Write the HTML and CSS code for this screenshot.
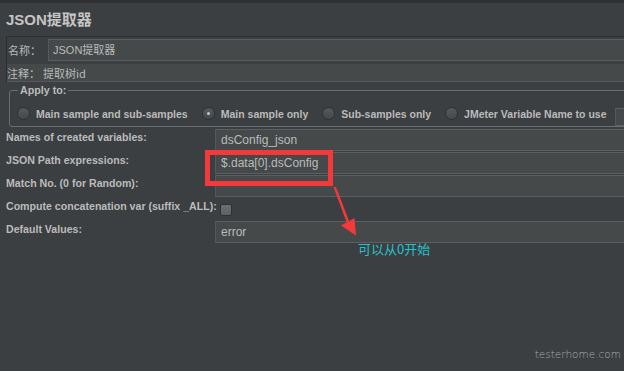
FILE: index.html
```html
<!DOCTYPE html>
<html>
	<head>
		<meta charset="utf-8">
		<title>JSON提取器</title>
		<link rel="stylesheet" href="styles.css">
	</head>
	<body>
		<div class="page">
			<h1 class="title">JSON提取器</h1>

			<!-- 名称 / 注释 -->
			<div class="meta">
				<div class="meta-row">
					<span class="meta-label">名称：</span>
					<div class="field name-field">JSON提取器</div>
				</div>
				<div class="meta-row comment-row">
					<span class="meta-label">注释：</span>
					<span class="comment-text">提取树id</span>
				</div>
			</div>

			<!-- Apply to -->
			<fieldset class="apply">
				<legend>Apply to:</legend>
				<div class="radios">
					<label class="radio"><span class="dot"></span>Main sample and sub-samples</label>
					<label class="radio"><span class="dot checked"></span>Main sample only</label>
					<label class="radio"><span class="dot"></span>Sub-samples only</label>
					<label class="radio"><span class="dot"></span>JMeter Variable Name to use</label>
					<div class="field var-field"></div>
				</div>
			</fieldset>

			<!-- 表单 -->
			<div class="form">
				<div class="label">Names of created variables:</div>
				<div class="field">dsConfig_json</div>
				<div class="label">JSON Path expressions:</div>
				<div class="field">$.data[0].dsConfig</div>
				<div class="label">Match No. (0 for Random):</div>
				<div class="field"></div>
				<div class="label">Compute concatenation var (suffix _ALL):</div>
				<div class="check-cell"><span class="checkbox"></span></div>
				<div class="label">Default Values:</div>
				<div class="field">error</div>
			</div>
		</div>

		<!-- 标注 -->
		<div class="highlight"></div>
		<svg class="arrow" viewBox="325 180 40 56" width="40" height="56">
			<polygon points="333.5,184 336,184 349,218 346.5,219" fill="#f4393b"/>
			<polygon points="341,222.5 354.5,215 356,232.5" fill="#f4393b"/>
		</svg>
		<div class="note">可以从0开始</div>
		<div class="watermark">testerhome.com</div>
	</body>
</html>
```

FILE: styles.css
```css
*{
	box-sizing: border-box;
}
html, body{
	margin: 0;
	padding: 0;
}
body{
	position: relative;
	width: 624px;
	height: 371px;
	overflow: hidden;
	background-color: #3c3f41;
	border-top: 3px solid #2f3133;
	font-family: "Liberation Sans", "Noto Sans CJK SC", sans-serif;
	color: #bbbbbb;
}
.page{
	width: 720px;
	padding-left: 6px;
}

/* 标题 */
.title{
	margin: 8px 0 7px 0;
	font-size: 15px;
	line-height: 18px;
	font-weight: bold;
	color: #c4c4c4;
}

/* 名称 注释 */
.meta{
	border-top: 1px solid #2c2e30;
	border-left: 1px solid #2c2e30;
	padding-top: 2px;
}
.meta-row{
	display: flex;
	align-items: center;
}
.meta-label{
	width: 41px;
	padding-left: 1px;
	font-size: 11px;
	font-family: "Noto Sans CJK SC", sans-serif;
}
.field{
	height: 22px;
	line-height: 20px;
	padding-left: 5px;
	background-color: #45494a;
	border-top: 1px solid #5c5f61;
	border-bottom: 1px solid #5c5f61;
	border-left: 1px solid #55585a;
	font-size: 12px;
	color: #bbbbbb;
	white-space: nowrap;
	overflow: hidden;
}
.name-field{
	flex: 1;
	font-size: 11px;
	padding-left: 4px;
}
.comment-row{
	margin-top: 3px;
	height: 18px;
	background-color: #45494a;
	border-bottom: 1px solid #56595b;
}
.comment-row .meta-label{
	width: 36px;
	padding-left: 0;
}
.comment-text{
	font-size: 11px;
	font-family: "Noto Sans CJK SC", sans-serif;
}

/* Apply to 单选框 */
.apply{
	margin: 2px 0 0 3px;
	padding: 10px 0 6px 7px;
	border: 1px solid #6c6f71;
	border-radius: 3px;
	min-width: 0;
}
.apply legend{
	margin-left: 1px;
	padding: 0 2px;
	font-size: 10.7px;
	line-height: 13px;
	font-weight: bold;
}
.radios{
	display: flex;
	align-items: center;
	height: 13px;
}
.radio{
	display: flex;
	align-items: center;
	gap: 6px;
	margin-right: 14px;
	font-size: 10.5px;
	font-weight: bold;
	white-space: nowrap;
}
.radio:last-of-type{
	margin-right: 8px;
}
.dot{
	position: relative;
	width: 13px;
	height: 13px;
	border-radius: 50%;
	border: 1px solid #2e3032;
	background: linear-gradient(#56595b, #46494b);
}
.dot.checked::after{
	content: '';
	position: absolute;
	left: 4px;
	top: 4px;
	width: 3px;
	height: 3px;
	border-radius: 50%;
	background-color: #c8c8c8;
}
.var-field{
	flex: 1;
	height: 18px;
	margin-top: 6px;
}

/* 表单 */
.form{
	display: grid;
	grid-template-columns: 209px 1fr;
	grid-auto-rows: 22px;
	row-gap: 1px;
	margin-top: 2px;
}
.label{
	padding-top: 1px;
	font-size: 10.6px;
	line-height: 14px;
	font-weight: bold;
	white-space: nowrap;
}
.check-cell{
	padding: 6px 0 0 5px;
}
.checkbox{
	display: block;
	width: 12px;
	height: 12px;
	border: 1px solid #2e3032;
	background: linear-gradient(#6d7072, #5e6163);
	border-radius: 2px;
}

/* 标注 */
.highlight{
	position: absolute;
	left: 205px;
	top: 147px;
	width: 128px;
	height: 36px;
	border: 5px solid #f4393b;
}
.arrow{
	position: absolute;
	left: 325px;
	top: 180px;
}
.note{
	position: absolute;
	left: 358px;
	top: 239px;
	font-family: "Noto Sans CJK SC", sans-serif;
	font-size: 13px;
	line-height: 13px;
	color: #25c2cb;
}
.watermark{
	position: absolute;
	right: 3px;
	bottom: 11px;
	font-family: "DejaVu Sans", sans-serif;
	font-weight: 200;
	font-size: 10.5px;
	color: #a9abad;
}
```
